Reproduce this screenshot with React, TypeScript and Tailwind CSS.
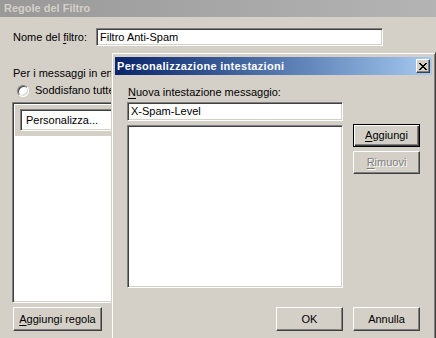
import React from "react";

const sunken =
  "border border-t-[#808080] border-l-[#808080] border-r-white border-b-white shadow-[inset_1px_1px_0_#404040,inset_-1px_-1px_0_#d4d0c8] bg-white";
const raised =
  "border border-t-white border-l-white border-r-[#404040] border-b-[#404040] shadow-[inset_-1px_-1px_0_#808080] bg-[#d4d0c8]";
const defaultBtn =
  "border border-black shadow-[inset_1px_1px_0_#fff,inset_-1px_-1px_0_#404040,inset_-2px_-2px_0_#808080] bg-[#d4d0c8]";

function CloseGlyph() {
  return (
    <svg width="8" height="7" viewBox="0 0 8 7" shapeRendering="crispEdges">
      <path
        d="M0 0h2v1H0zM6 0h2v1H6zM1 1h2v1H1zM5 1h2v1H5zM2 2h4v1H2zM3 3h2v1H3zM2 4h4v1H2zM1 5h2v1H1zM5 5h2v1H5zM0 6h2v1H0zM6 6h2v1H6z"
        fill="#000"
      />
    </svg>
  );
}

export default function App() {
  return (
    <div className="relative w-[436px] h-[338px] overflow-hidden bg-[#d4d0c8] text-black text-[11px] leading-[13px] font-['Liberation_Sans',Arial,sans-serif]">
      {/* Back window title */}
      <div className="h-[17px] bg-linear-to-r from-[#999999] to-[#b4b4b4] pl-[4px] flex items-center">
        <span className="font-bold text-[#d4d0c8]">Regole del Filtro</span>
      </div>

      {/* Back window body */}
      <div className="pl-[12px] flex flex-col">
        <div className="mt-[11px] flex items-center pl-[1px]">
          <span className="w-[83px]">
            Nome del <u className="underline-offset-2">f</u>iltro:
          </span>
          <div className={`${sunken} w-[287px] h-[18px] flex items-center pl-[3px]`}>
            Filtro Anti-Spam
          </div>
        </div>

        <div className="mt-[21px] pl-[1px] w-[99px] overflow-hidden whitespace-nowrap">
          Per i messaggi in entrata che:
        </div>

        <div className="mt-[4px] h-[13px] w-[99px] overflow-hidden flex items-center pl-[5px] whitespace-nowrap">
          <div className="shrink-0 w-[12px] h-[12px] rounded-full border border-t-[#808080] border-l-[#808080] border-b-white border-r-white bg-white shadow-[inset_1px_1px_0_#404040,inset_-1px_-1px_0_#d4d0c8]" />
          <span className="ml-[6px]">Soddisfano tutte le regole</span>
        </div>

        <div className={`${sunken} mt-[5px] w-[400px] h-[201px] flex flex-col p-[2px]`}>
          <div className="h-[31px] bg-[#d4d0c8] pl-[5px] pt-[4px]">
            <div className={`${sunken} w-[200px] h-[22px] flex items-center pl-[5px]`}>Personalizza...</div>
          </div>
          <div className="flex-1 bg-white" />
        </div>

        <div className="mt-[4px] ml-[1px]">
          <div className={`${raised} w-[89px] h-[24px] flex items-center justify-center`}>
            <span>
              <u className="underline-offset-2">A</u>ggiungi regola
            </span>
          </div>
        </div>
      </div>

      {/* Modal dialog */}
      <div className="absolute left-[111px] top-[52px] w-[325px] h-[300px] bg-[#d4d0c8] border border-t-[#d4d0c8] border-l-[#d4d0c8] border-r-[#404040] border-b-[#404040] shadow-[inset_1px_1px_0_#fff,inset_-1px_-1px_0_#808080] pt-[4px] px-[3px] flex flex-col">
        <div className="h-[18px] bg-linear-to-r from-[#0a246a] to-[#a6caf0] flex items-center justify-between pl-[2px] pr-[2px]">
          <span className="font-bold text-white tracking-[0.3px]">Personalizzazione intestazioni</span>
          <div className={`${raised} w-[14px] h-[14px] flex items-center justify-center`}>
            <CloseGlyph />
          </div>
        </div>

        <div className="pl-[12px] pr-[12px] flex flex-col">
          <div className="flex">
            <div className="flex flex-col w-[216px]">
              <div className="mt-[11px] pl-[1px] whitespace-nowrap">
                <u className="underline-offset-2">N</u>uova intestazione messaggio:
              </div>
              <div className={`${sunken} mt-[3px] h-[19px] flex items-center pl-[3px]`}>X-Spam-Level</div>
              <div className={`${sunken} mt-[4px] h-[163px]`} />
            </div>
            <div className="ml-[10px] flex flex-col pt-[49px] gap-[4px]">
              <div className={`${defaultBtn} w-[67px] h-[23px] flex items-center justify-center`}>
                <span>
                  <u className="underline-offset-2">A</u>ggiungi
                </span>
              </div>
              <div className={`${raised} w-[67px] h-[23px] flex items-center justify-center text-[#808080] [text-shadow:1px_1px_0_#fff]`}>
                <span>
                  <u className="underline-offset-2">R</u>imuovi
                </span>
              </div>
            </div>
          </div>

          <div className="mt-[19px] flex justify-end gap-[10px]">
            <div className={`${raised} w-[67px] h-[24px] flex items-center justify-center`}>OK</div>
            <div className={`${raised} w-[67px] h-[24px] flex items-center justify-center`}>Annulla</div>
          </div>
        </div>
      </div>
    </div>
  );
}
